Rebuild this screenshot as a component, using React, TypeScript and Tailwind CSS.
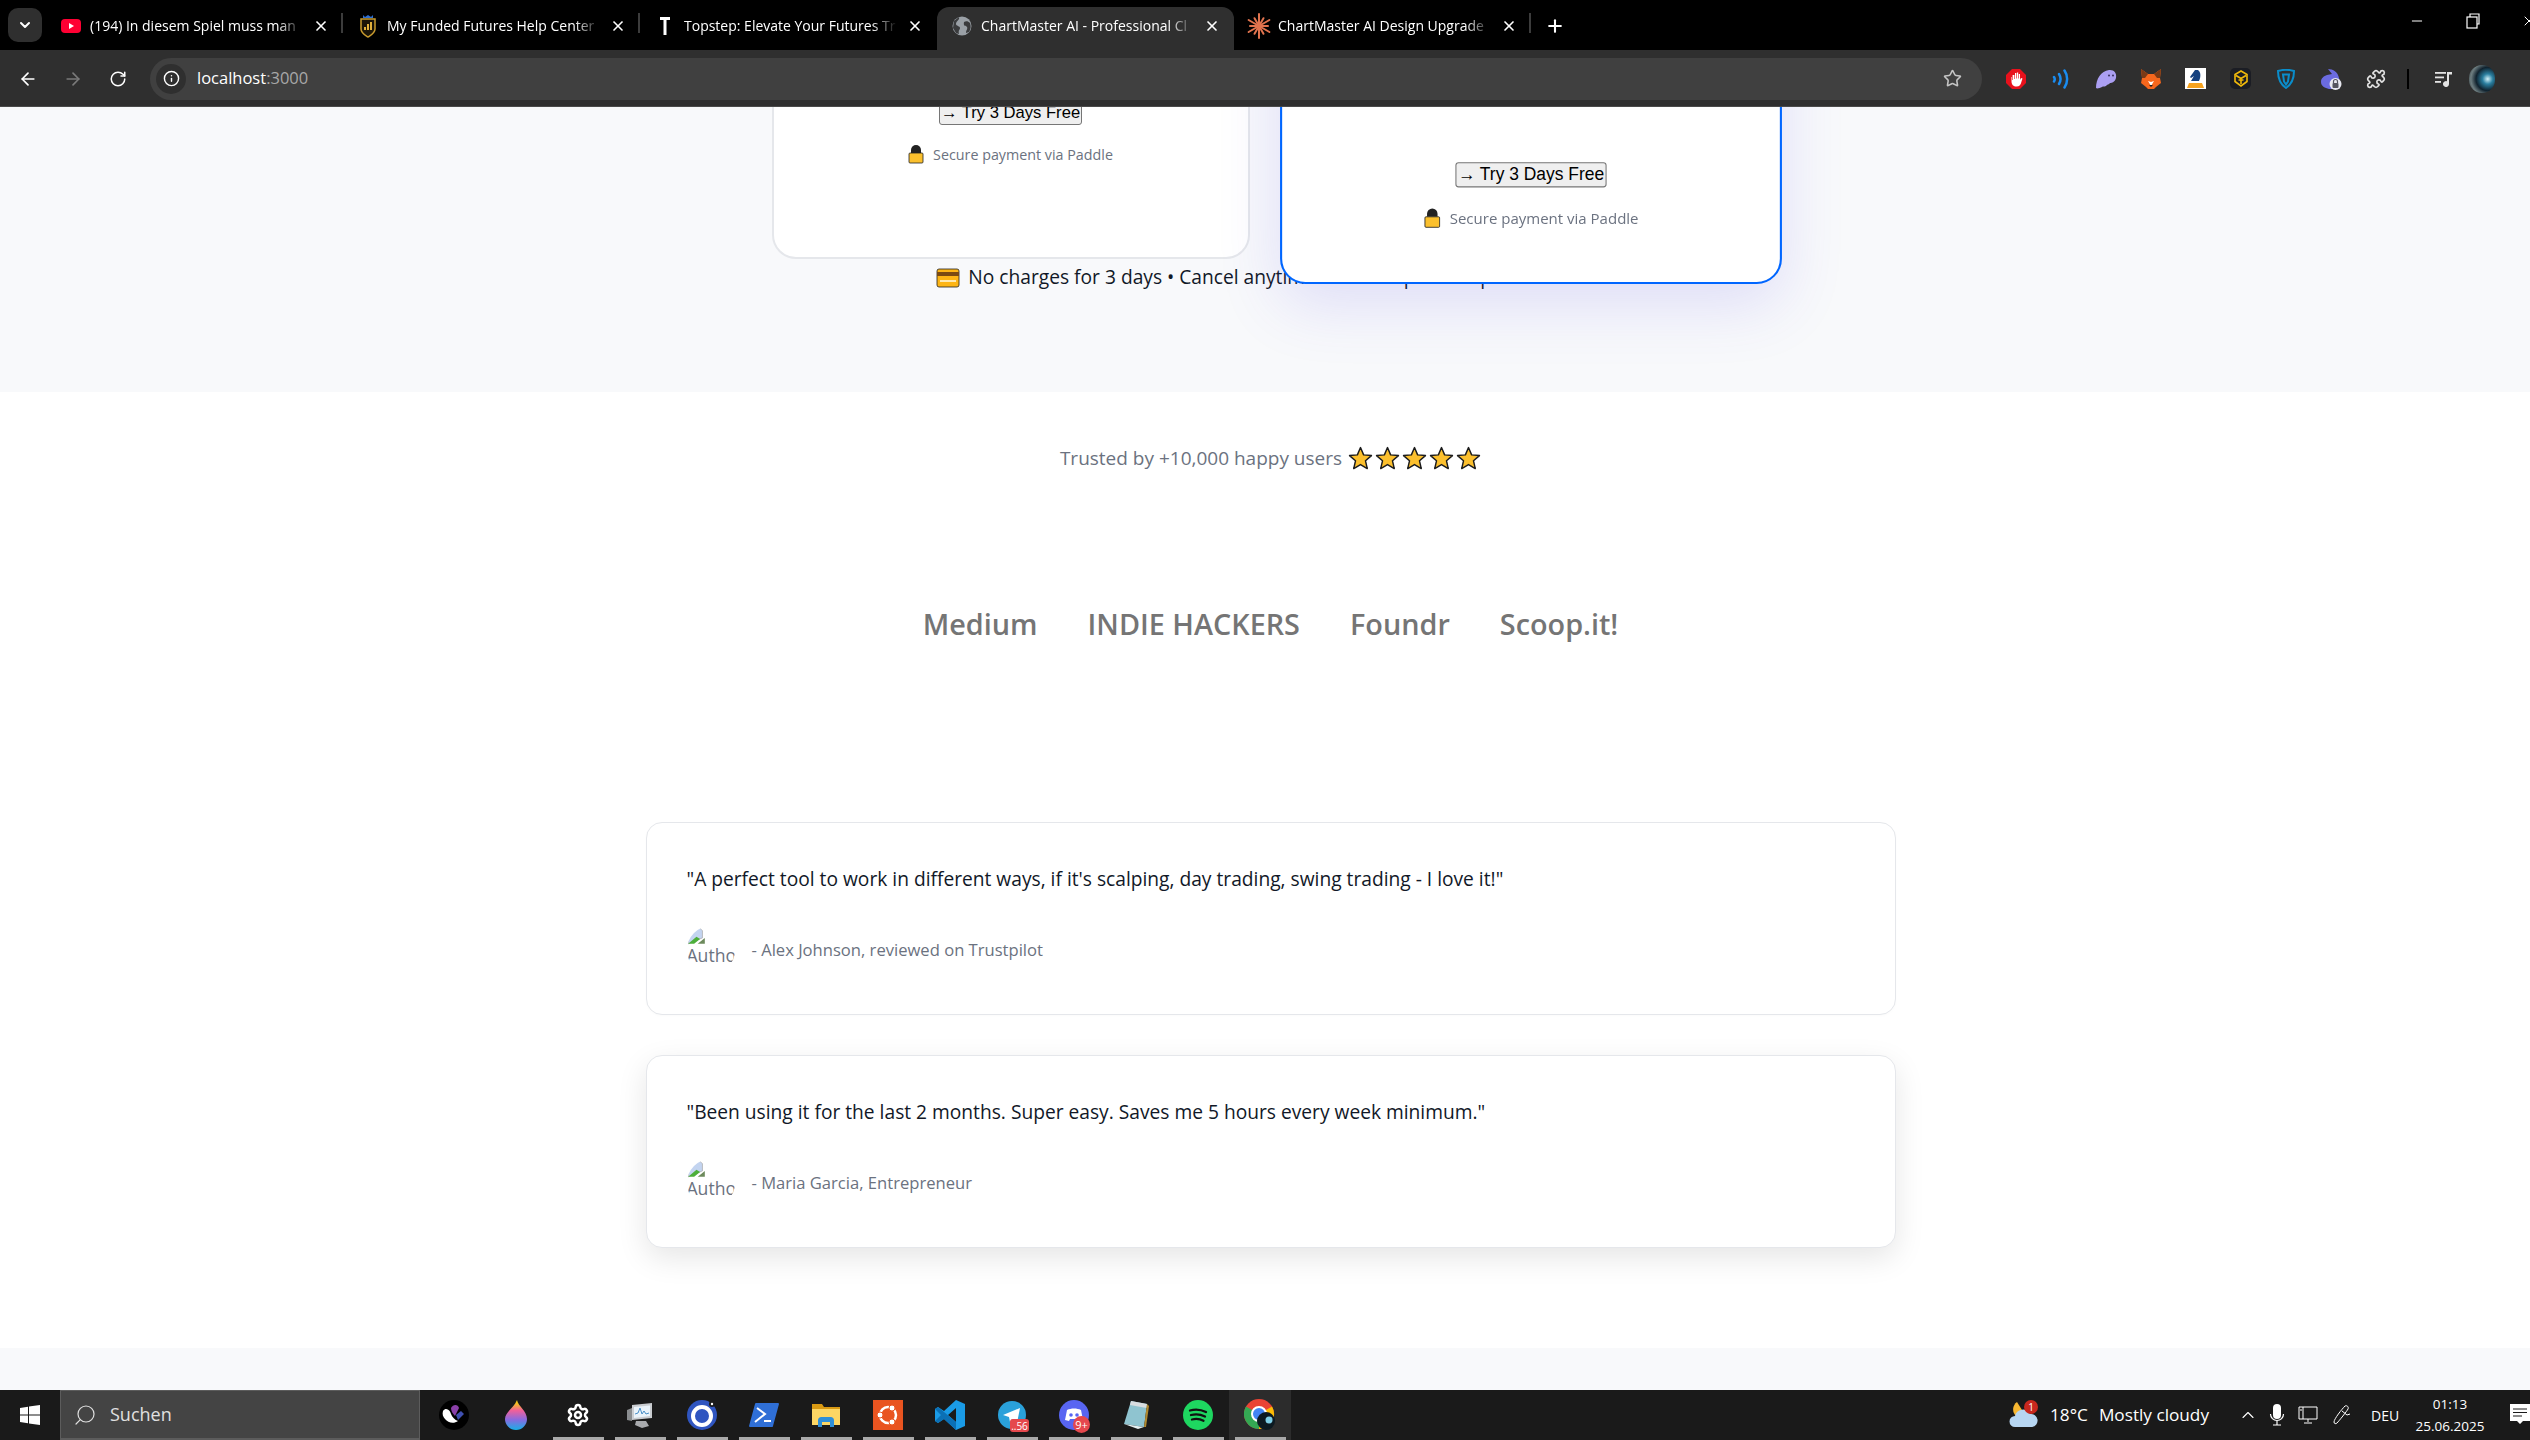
import React from 'react';
import { ArrowLeft, ArrowRight, RotateCw, Info, Star, Plus, X, ChevronDown, ChevronUp, Search, Minus, Settings, Puzzle } from 'lucide-react';

const uiFont = "[font-family:'Open_Sans','Noto_Sans',sans-serif]";

const Yt = () => (
  <svg width="20" height="20" viewBox="0 0 20 20"><rect x="0" y="3" width="20" height="14" rx="4" fill="#ff0033" /><path d="M8 7l5 3-5 3z" fill="#fff" /></svg>
);
const Shield = () => (
  <svg width="20" height="24" viewBox="0 0 20 24"><path d="M5 1l2 2 3-2 3 2 2-2v3H5z" fill="#2f6fd0" /><path d="M3 5h14v10c0 4-4 6-7 8-3-2-7-4-7-8z" fill="#1a1408" stroke="#c79a2e" strokeWidth="1.5" /><path d="M7 16v-3M10 16v-6M13 16V8" stroke="#e0b03c" strokeWidth="2" /></svg>
);
const Topstep = () => (
  <svg width="18" height="22" viewBox="0 0 18 22"><path d="M4 2h10v3h-3.5v15h-3V5H4z" fill="#fff" /></svg>
);
const Globe = () => (
  <svg width="20" height="20" viewBox="0 0 20 20"><circle cx="10" cy="10" r="9.5" fill="#9aa0a6" /><path d="M7 1c1 3-3 4-3 7 0 2 4 2 4 4s-2 2-1 6l-3-1-3-5 1-7zM12 6c2-1 4-1 6 1 1 3 1 6-1 9l-3 1c0-3 2-4 1-6s-4 0-3-5z" fill="#3a3b3d" /></svg>
);
const Claude = () => (
  <svg width="24" height="26" viewBox="0 0 24 26" stroke="#e0734e" strokeWidth="2" strokeLinecap="round">
    {[0, 30, 60, 90, 120, 150, 180, 210, 240, 270, 300, 330].map(a => (
      <line key={a} x1="12" y1="13" x2="12" y2={a % 60 === 0 ? 1 : 4} transform={`rotate(${a} 12 13)`} />
    ))}
  </svg>
);

const tabs = [
  { title: '(194) In diesem Spiel muss man', icon: <Yt /> },
  { title: 'My Funded Futures Help Center', icon: <Shield /> },
  { title: 'Topstep: Elevate Your Futures Tr', icon: <Topstep /> },
  { title: 'ChartMaster AI - Professional Cl', icon: <Globe />, active: true },
  { title: 'ChartMaster AI Design Upgrade', icon: <Claude /> },
];

const TabStrip = () => (
  <div className="flex h-[50px] shrink-0 items-end bg-black">
    <div className="mb-[8px] ml-[8px] mr-[4px] flex h-[34px] w-[34px] items-center justify-center rounded-[10px] bg-[#2f2f2f] text-white">
      <ChevronDown size={16} strokeWidth={3} />
    </div>
    {tabs.map((t, i) => (
      <div
        key={t.title}
        className={`relative flex h-[43px] w-[297px] shrink-0 items-center rounded-t-[12px] pb-[6px] ${t.active ? 'bg-[#2f2f2f]' : ''}`}
      >
        <div className="flex w-[44px] shrink-0 justify-center pl-[6px]">{t.icon}</div>
        <div className="w-[213px] overflow-hidden whitespace-nowrap text-[14px] text-white [mask-image:linear-gradient(90deg,#000_88%,transparent)]">{t.title}</div>
        <X size={16} strokeWidth={2.5} className="ml-[10px] text-white" />
        {i !== 2 && i !== 3 && <div className="absolute right-0 top-[6px] h-[20px] w-[2px] bg-[#3c3c3c]" />}
      </div>
    ))}
    <Plus size={20} strokeWidth={2.5} className="mb-[14px] ml-[14px] text-white" />
    <div className="mb-[8px] ml-auto -mr-[7px] flex h-[42px] items-center gap-[41px] text-white">
      <Minus size={16} strokeWidth={1.5} />
      <svg width="14" height="16" viewBox="0 0 14 16" fill="none" stroke="#fff" strokeWidth="1.2"><rect x="1" y="4" width="10" height="11" /><path d="M4 4V1h9v10h-2" /></svg>
      <X size={16} strokeWidth={1.5} />
    </div>
  </div>
);

const Ext = ({ children }: { children: React.ReactNode }) => (
  <div className="flex h-[40px] w-[45px] shrink-0 items-center justify-center">{children}</div>
);

const ToolBar = () => (
  <div className="flex h-[57px] shrink-0 items-center border-b border-[#4a4a4a] bg-[#2f2f2f] pl-[5px] pt-[1px] text-white">
    <div className="flex w-[45px] justify-center"><ArrowLeft size={20} strokeWidth={2} /></div>
    <div className="flex w-[45px] justify-center text-[#7a7a7a]"><ArrowRight size={20} strokeWidth={2} /></div>
    <div className="flex w-[46px] justify-center"><RotateCw size={18} strokeWidth={2} /></div>
    <div className="ml-[9px] flex h-[42px] w-[1832px] shrink-0 items-center rounded-full bg-[#404040] pl-[6px] pr-[20px]">
      <div className="flex h-[30px] w-[30px] items-center justify-center rounded-full bg-[#2f2f2f]"><Info size={17} strokeWidth={2} /></div>
      <div className="ml-[11px] text-[16.5px]">localhost<span className="text-[#a8a8a8]">:3000</span></div>
      <Star size={19} strokeWidth={2} className="ml-auto text-[#c4c4c4]" />
    </div>
    <div className="ml-[11px] flex items-center">
      <Ext>
        <svg width="22" height="22" viewBox="0 0 22 22"><path d="M7 1h8l6 6v8l-6 6H7l-6-6V7z" fill="#e8111c" /><path d="M6.5 9v4.500c0 3 2 5 5 5s4.500-2 5-5l1-3-1.500-.5-1 2V6h-1.200v4.500h-.6V4.500h-1.300v6h-.6V5h-1.300v6h-.6V7H7.600v5H7V9z" fill="#fff" /></svg>
      </Ext>
      <Ext>
        <svg width="18" height="20" viewBox="0 0 18 20" fill="none" stroke="#1a8cf0" strokeWidth="2.500" strokeLinecap="round"><path d="M2 8c1 1.500 1 3 0 4.500M7 5c2 3.200 2 6.800 0 10M12.500 1.500c3.500 5 3.500 12 0 17" /></svg>
      </Ext>
      <Ext>
        <svg width="22" height="20" viewBox="0 0 22 20"><path d="M1 19C1 10 6 2 14 1c5-.5 8 3 7 8-1 4-4 5-6 5-1 2-3 1-4 3-2 1-3 0-4 1-2 1-5 2-6 1z" fill="#ab9ff2" /><circle cx="14" cy="6.500" r="1" fill="#3a3360" /><circle cx="18" cy="6.500" r="1" fill="#3a3360" /></svg>
      </Ext>
      <Ext>
        <svg width="20" height="20" viewBox="0 0 20 20"><path d="M0 0l7 5h6l7-5-1 9 1 5-5 4-2 2H7l-2-2-5-4 1-5z" fill="#f6671d" /><path d="M0 0l7 5-3 4H1zM20 0l-7 5 3 4h3z" fill="#7a3a16" /><path d="M7 12l3 5 3-5-3 1z" fill="#fff" /><path d="M8 16h4l-2 2z" fill="#222" /></svg>
      </Ext>
      <Ext>
        <svg width="21" height="21" viewBox="0 0 21 21"><rect width="21" height="21" fill="#fff" /><path d="M5 9l5-7h3c3 2 3 7 1 11H6l3-5-3 2z" fill="#14417f" /><path d="M4 15h13l2 5H2z" fill="#f6a21e" /></svg>
      </Ext>
      <Ext>
        <div className="flex h-[21px] w-[21px] items-center justify-center rounded-[5px] bg-[#1b1d24]">
          <svg width="16" height="17" viewBox="0 0 16 17" fill="none" stroke="#f0b90b" strokeWidth="1.600"><path d="M8 1l6 3.500v7L8 16l-6-4.500v-7zM3 5.500l5 3 5-3M8 8.500V14M5.500 10h5" /></svg>
        </div>
      </Ext>
      <Ext>
        <svg width="18" height="20" viewBox="0 0 18 20" fill="none" stroke="#0a8dcb" strokeWidth="2"><path d="M1 2c5-1.500 11-1.500 16 0 0 7-2 13-8 17C3 15 1 9 1 2z" /><path d="M6 5.500h6l-1 7-2 3-2-3z" /></svg>
      </Ext>
      <Ext>
        <svg width="22" height="22" viewBox="0 0 22 22"><path d="M1 14c0-4 3-6 6-7L12 6 8 1c5 0 10 3 11 9 1 5 0 9-2 11H9C5 20 1 18 1 14z" fill="#6b6be0" /><circle cx="15.500" cy="16" r="6" fill="#e8e8f0" /><rect x="12.500" y="15" width="6" height="5" rx="1" fill="#55555f" /><path d="M13.500 15v-1.500a2 2 0 014 0V15" fill="none" stroke="#55555f" strokeWidth="1.200" /></svg>
      </Ext>
      <Ext>
        <Puzzle size={20} strokeWidth={2} className="text-[#e3e3e3]" />
      </Ext>
      <div className="ml-[9px] h-[20px] w-[2px] bg-black" />
      <div className="ml-[12px] flex w-[45px] justify-center">
        <svg width="18" height="16" viewBox="0 0 18 16" fill="#e3e3e3"><rect x="0" y="1" width="11" height="1.800" /><rect x="0" y="5.500" width="9" height="1.800" /><rect x="0" y="10" width="6" height="1.800" /><path d="M12 1h5v2.500h-3V13a3 3 0 11-2-2.800z" /></svg>
      </div>
      <div className="ml-[3px] h-[28px] w-[26px] rounded-full bg-[radial-gradient(circle_at_72%_50%,#d5f3fa_0%,#2a7fa0_22%,#10222e_50%,#6d7d80_72%,#1a2226_100%)]" />
    </div>
  </div>
);

const Lock = () => (
  <svg width="16" height="20" viewBox="0 0 16 20"><path d="M3 9V6a5 5 0 0110 0v3z" fill="#222" /><rect x="1" y="9" width="14" height="10" rx="1" fill="#fbc02d" stroke="#222" strokeWidth="0.800" /></svg>
);

const Secure = () => (
  <div className="flex items-center gap-[9px] text-[14.3px] text-[#6b7280]"><Lock /><span>Secure payment via Paddle</span></div>
);

const TryButton = () => (
  <button className="rounded-[3px] border border-[#767676] bg-[#efefef] px-[1px] py-[2px] text-[16.6px] leading-[18px] text-black [font-family:'Liberation_Sans',sans-serif]">→ Try 3 Days Free</button>
);

const StarIcon = () => (
  <svg width="25" height="25" viewBox="0 0 24 24"><path d="M12 1.500l3 7 7.500.7-5.700 5 1.700 7.500L12 17.800 5.500 21.700l1.700-7.500-5.700-5 7.500-.7z" fill="#fcc02e" stroke="#1c1c1c" strokeWidth="1.400" strokeLinejoin="round" /></svg>
);

const Pricing = () => (
  <section className="flex h-[285px] shrink-0 flex-col items-center bg-[#f8f9fb] pl-[11px]">
    <div className="-mt-[848px] flex h-[1000px] shrink-0 gap-[42px]">
      <div className="flex h-full w-[478px] flex-col items-center justify-end rounded-[24px] border-2 border-[#e5e7eb] bg-white pb-[92px]">
        <TryButton />
        <div className="mt-[19px]"><Secure /></div>
      </div>
      <div className="flex h-full w-[478px] scale-105 flex-col items-center justify-end rounded-[24px] border-2 border-[#0066ff] bg-white pb-[50px] shadow-[0_20px_60px_rgba(79,70,229,0.15)]">
        <TryButton />
        <div className="mt-[19px]"><Secure /></div>
      </div>
    </div>
    <div className="mt-[5px] flex h-[27px] items-center gap-[8px] whitespace-nowrap text-[19.2px] text-[#111827]">
      <svg width="24" height="20" viewBox="0 0 24 20"><rect x="1" y="1" width="22" height="18" rx="2" fill="#fdb515" stroke="#222" strokeWidth="0.800" /><rect x="1" y="4" width="22" height="4" fill="#7a4a12" /><rect x="4" y="12" width="16" height="2" fill="#ffe9b0" /></svg>
      <span>No charges for 3 days • Cancel anytime • and keep all the perks forever.</span>
    </div>
  </section>
);

const BrokenImage = () => (
  <svg width="19" height="19" viewBox="0 0 16 16">
    <path d="M1 1h9l3 3v6L1 15z" fill="#c3d4f0" stroke="#a8a8a8" strokeWidth="0.600" />
    <path d="M1 15l7-6 3 2-5 4z" fill="#4caf3a" />
    <path d="M15 10v5H9z" fill="#6d8a5c" />
  </svg>
);

const Review = ({ quote, author, hovered }: { quote: string; author: string; hovered?: boolean }) => (
  <div className={`w-[1250px] rounded-[16px] border border-[#e5e7eb] bg-white px-[40px] pb-[40px] pt-[38px] ${hovered ? 'shadow-[0_10px_30px_rgba(0,0,0,0.1)]' : 'shadow-[0_1px_3px_rgba(0,0,0,0.02)]'}`}>
    <p className="mb-[29px] text-[19.2px] leading-[36px] text-[#111827]">{quote}</p>
    <div className="flex items-center gap-[17px]">
      <div className="h-[48px] w-[48px] shrink-0 overflow-hidden rounded-full text-[17.6px] leading-[20px] text-[#6b7280]">
        <BrokenImage />
        <span>Author</span>
      </div>
      <span className="text-[16.6px] text-[#6b7280]">{author}</span>
    </div>
  </div>
);

const Social = () => (
  <section className="flex shrink-0 flex-col items-center bg-white pb-[100px] pl-[11px] pt-[53px]">
    <div className="flex h-[27px] items-center gap-[6px] text-[19px] text-[#6b7280]">
      <span>Trusted by +10,000 happy users</span>
      <div className="flex gap-[2px]">{[1, 2, 3, 4, 5].map(s => <StarIcon key={s} />)}</div>
    </div>
    <div className="mt-[132px] flex h-[40px] items-center gap-[50px] text-[28.8px] font-semibold text-[#757575]">
      <span>Medium</span>
      <span>INDIE HACKERS</span>
      <span>Foundr</span>
      <span>Scoop.it!</span>
    </div>
    <div className="mt-[178px] flex flex-col gap-[40px]">
      <Review quote={`"A perfect tool to work in different ways, if it's scalping, day trading, swing trading - I love it!"`} author="- Alex Johnson, reviewed on Trustpilot" />
      <Review hovered quote={`"Been using it for the last 2 months. Super easy. Saves me 5 hours every week minimum."`} author="- Maria Garcia, Entrepreneur" />
    </div>
  </section>
);

const Cell = ({ children, on, active }: { children: React.ReactNode; on?: boolean; active?: boolean }) => (
  <div className={`relative flex h-[50px] w-[62px] shrink-0 items-center justify-center ${active ? 'bg-[#2c2c2c]' : ''}`}>
    {children}
    {on && <div className="absolute bottom-0 h-[3px] w-[51px] bg-[#a9a9a9]" />}
  </div>
);

const TaskBar = () => (
  <div className="flex h-[50px] shrink-0 items-center bg-[#1a1a1a] text-white">
    <div className="flex w-[60px] shrink-0 justify-center">
      <svg width="20" height="20" viewBox="0 0 20 20" fill="#fff"><path d="M0 3l8-1.200V9.500H0zM9 1.600L20 0v9.500H9zM0 10.500h8v7.700L0 17zM9 10.500h11V20L9 18.400z" /></svg>
    </div>
    <div className="flex h-[50px] w-[360px] shrink-0 items-center border border-b-2 border-[#5c5c5c] bg-[#444444] pl-[12px] text-[18px] text-[#e0e0e0]">
      <Search size={24} strokeWidth={1.200} className="-scale-x-100" />
      <span className="ml-[13px]">Suchen</span>
    </div>
    <div className="ml-[3px] flex">
      <Cell>
        <svg width="30" height="30" viewBox="0 0 30 30"><circle cx="15" cy="15" r="15" fill="#000" /><path d="M4 11c3-4 7-1 8 3 1 3 4 6 7 7-4 3-10 2-13-2-2-2-3-5-2-8z" fill="#fff" /><path d="M12 8c2-4 7-4 8 0l-4 8c-2-2-4-5-4-8z" fill="#8a3fa8" /><path d="M17 15l5-4 3 3-6 6z" fill="#3f4fb0" /></svg>
      </Cell>
      <Cell>
        <svg width="24" height="30" viewBox="0 0 24 30"><defs><linearGradient id="dropG" x1="0" y1="0" x2="0" y2="1"><stop offset="0.100" stopColor="#f5c518" /><stop offset="0.350" stopColor="#f0609a" /><stop offset="0.650" stopColor="#8a6adf" /><stop offset="1" stopColor="#17b0e6" /></linearGradient></defs><path d="M13 0c1 6 10 11 10 19a11 11 0 01-22 0C1 12 10 8 13 0z" fill="url(#dropG)" /></svg>
      </Cell>
      <Cell on><Settings size={24} strokeWidth={2.500} /></Cell>
      <Cell on>
        <svg width="28" height="28" viewBox="0 0 28 28"><path d="M6 4l20-2v15L6 19z" fill="#c9ccd0" /><path d="M8 6l16-1.500V15L8 17z" fill="#eaf3fa" /><path d="M9 13l3-1 2-5 2 6 2-3 2 3 3-1" fill="none" stroke="#4a90c8" strokeWidth="1" /><path d="M1 9l5-2v13l-5-1z" fill="#8a8d90" /><path d="M10 20h10l3 5-7 2-7-3z" fill="#a8aaad" /></svg>
      </Cell>
      <Cell on>
        <svg width="30" height="30" viewBox="0 0 30 30"><circle cx="15" cy="15" r="15" fill="#2f55c0" /><circle cx="15" cy="16" r="9" fill="none" stroke="#fff" strokeWidth="4" /><circle cx="25" cy="4" r="3" fill="#1a1a1a" /><circle cx="25" cy="4" r="1.200" fill="#fff" /></svg>
      </Cell>
      <Cell on>
        <svg width="30" height="24" viewBox="0 0 30 24"><path d="M7 0h22c1 0 1 1 1 1l-6 22c0 1-1 1-1 1H1c-1 0-1-1-1-1L6 1c0-1 1-1 1-1z" fill="#2f6fd6" /><path d="M8 5l8 6-10 8M15 18h7" fill="none" stroke="#fff" strokeWidth="2" /></svg>
      </Cell>
      <Cell on>
        <svg width="28" height="24" viewBox="0 0 28 24"><path d="M0 1h10l2 3h16v4H0z" fill="#d99a13" /><path d="M0 6h28v16H0z" fill="#fcd664" /><path d="M6 24v-7c0-2 2-3 3-3h10c1 0 3 1 3 3v7h-4v-5h-8v5z" fill="#2f8fd8" /></svg>
      </Cell>
      <Cell on>
        <svg width="30" height="30" viewBox="0 0 30 30"><rect width="30" height="30" fill="#e95420" /><circle cx="15" cy="15" r="8" fill="none" stroke="#fff" strokeWidth="2.500" /><circle cx="7" cy="15" r="3" fill="#fff" stroke="#e95420" /><circle cx="19" cy="8" r="3" fill="#fff" stroke="#e95420" /><circle cx="19" cy="22" r="3" fill="#fff" stroke="#e95420" /></svg>
      </Cell>
      <Cell on>
        <svg width="30" height="30" viewBox="0 0 30 30"><path d="M21 0l9 4v22l-9 4-12-11-6 4-3-2V9l3-2 6 4zM21 8l-8 7 8 7z" fill="#1a9be6" fillRule="evenodd" /><path d="M0 9l3-2 18 15v8L9 19l-6 4-3-2 6-6z" fill="#0b70b5" /></svg>
      </Cell>
      <Cell on>
        <svg width="28" height="28" viewBox="0 0 28 28"><circle cx="14" cy="14" r="14" fill="#2aa1da" /><path d="M5 14l17-7-3 15-5-4-2 3-1-5z" fill="#fff" /></svg>
        <span className="absolute bottom-[8px] right-[14px] flex h-[13px] w-[19px] items-center justify-center rounded-[3px] bg-[#e5484d] text-[10px] leading-none text-white">..56</span>
      </Cell>
      <Cell on>
        <svg width="30" height="30" viewBox="0 0 30 30"><circle cx="15" cy="15" r="15" fill="#5865f2" /><path d="M8 10c4-2 10-2 14 0l2 10-4 1-1-2H11l-1 2-4-1z" fill="#fff" /><circle cx="12" cy="15" r="1.800" fill="#5865f2" /><circle cx="18" cy="15" r="1.800" fill="#5865f2" /></svg>
        <span className="absolute bottom-[7px] right-[15px] flex h-[17px] w-[17px] items-center justify-center rounded-full bg-[#e5484d] text-[11px] leading-none text-white">9+</span>
      </Cell>
      <Cell on>
        <svg width="28" height="30" viewBox="0 0 28 30"><path d="M9 1l16 3-3 23-20-3z" fill="#8fc4d0" /><path d="M9 1l16 3-.5 4L8 5z" fill="#d8dde0" /><path d="M25 4l2 2-3 21h-2z" fill="#b0892f" /><path d="M2 24l20 3-6 2z" fill="#e4f0f2" /></svg>
      </Cell>
      <Cell on>
        <svg width="30" height="30" viewBox="0 0 30 30"><circle cx="15" cy="15" r="15" fill="#1ed760" /><path d="M7 10.500c5-1.500 11-1 16 1.500M8 15c4.500-1.200 9.500-.8 14 1.500M9 19.500c4-1 8-.6 11.500 1.300" fill="none" stroke="#111" strokeWidth="2.300" strokeLinecap="round" /></svg>
      </Cell>
      <Cell on active>
        <svg width="32" height="32" viewBox="0 0 32 32"><circle cx="15" cy="15" r="15" fill="#ea4335" /><path d="M15 15L28 7.500A15 15 0 0115 30z" fill="#fbbc05" /><path d="M15 15L15 30A15 15 0 012 7.500z" fill="#34a853" /><circle cx="15" cy="15" r="7" fill="#4285f4" stroke="#fff" strokeWidth="2" /><circle cx="22" cy="22" r="9" fill="#0c1a22" /><circle cx="25" cy="21" r="3.500" fill="#7fd0e8" /></svg>
      </Cell>
    </div>
    <div className="ml-auto flex h-full items-center text-[17.2px]">
      <svg width="30" height="30" viewBox="0 0 30 30" className="mr-[11px]"><path d="M8 2a9 9 0 00-1 14l6-6z" fill="#f7b731" /><path d="M6 27a5 5 0 010-11 8 8 0 0115-2 6.500 6.500 0 012 13z" fill="#b7d6f2" /><circle cx="22" cy="7" r="7" fill="#c8281e" /><text x="22" y="11" fontSize="10" textAnchor="middle" fill="#fff">1</text></svg>
      <span>18°C</span>
      <span className="ml-[11px]">Mostly cloudy</span>
      <ChevronUp size={20} strokeWidth={1.300} className="ml-[29px]" />
      <svg width="20" height="22" viewBox="0 0 20 22" fill="none" stroke="#fff" strokeWidth="1.200" className="ml-[9px]"><rect x="6" y="0" width="8" height="15" rx="4" fill="#fff" stroke="none" /><path d="M3.500 10a6.500 6.500 0 0013 0M10 17v4M6 21h8" /></svg>
      <svg width="20" height="18" viewBox="0 0 20 18" fill="none" stroke="#fff" strokeWidth="1" className="ml-[11px]"><path d="M1 1h18v12H5M1 1v12h4V1M10 13v3M6 17h8M2 4h2" /></svg>
      <svg width="20" height="20" viewBox="0 0 20 20" fill="none" stroke="#fff" strokeWidth="1" className="ml-[15px]"><path d="M1 17c0-3 8-13 11-16 2-1 4 1 3 3-1 2-9 12-11 14-1 1-3 1-3-1zM9 6l5 4 3-1" /></svg>
      <span className="ml-[18px] w-[29px] text-[14px]">DEU</span>
      <div className="ml-[14px] flex w-[72px] flex-col items-center text-[13.5px] leading-[22px]">
        <span>01:13</span>
        <span>25.06.2025</span>
      </div>
      <svg width="20" height="22" viewBox="0 0 20 22" className="ml-[24px]"><path d="M0 0h20v17h-7l-3 3-3-3H0z" fill="#fff" /><path d="M3 5h14M3 8.500h14M3 12h9" stroke="#1a1a1a" strokeWidth="1" /></svg>
    </div>
  </div>
);

export default function App() {
  return (
    <div className={`flex h-screen w-full flex-col overflow-hidden bg-white ${uiFont}`}>
      <TabStrip />
      <ToolBar />
      <main className="flex min-h-0 flex-1 flex-col overflow-hidden">
        <Pricing />
        <Social />
        <div className="flex-1 bg-[#f8f9fb]" />
      </main>
      <TaskBar />
    </div>
  );
}
